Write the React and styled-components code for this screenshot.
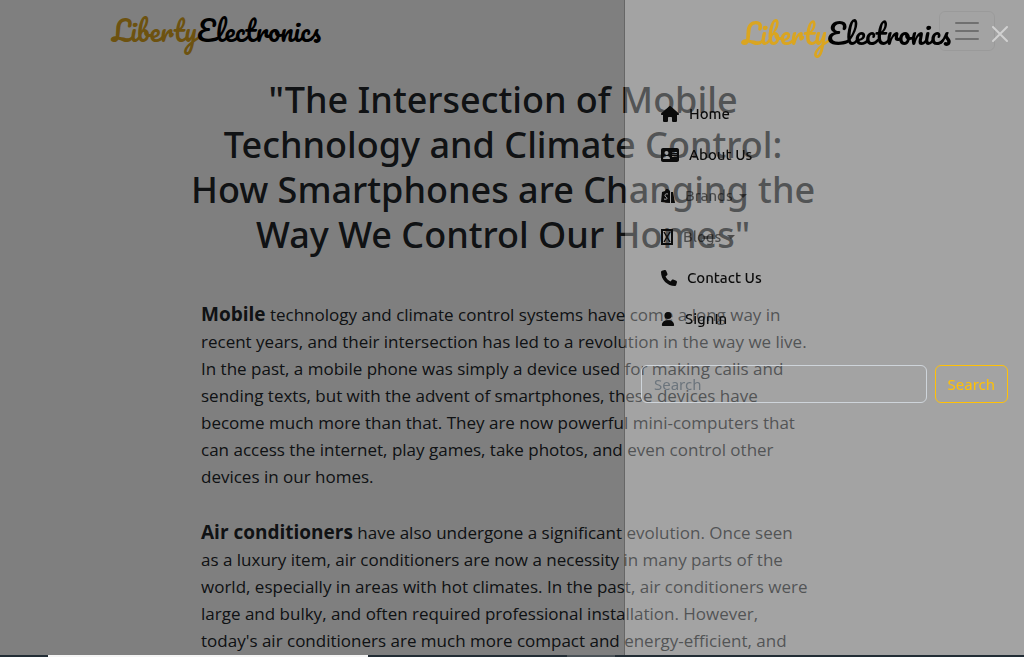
import React from "react";
import styled, { createGlobalStyle } from "styled-components";
import { FaHouse, FaAddressCard, FaPhone, FaUser } from "react-icons/fa6";

const GlobalStyle = createGlobalStyle`
  * { box-sizing: border-box; }
  html, body, #root { height: 100%; }
  body {
    margin: 0;
    overflow: hidden;
    background: #fff;
    color: #212529;
    font-family: "Segoe UI", "Noto Sans", "Open Sans", sans-serif;
    font-size: 16px;
  }
`;

const Page = styled.div`
  height: 100vh;
  overflow: hidden;
`;

const Navbar = styled.header`
  display: flex;
  align-items: center;
  justify-content: space-between;
  padding: 11px 29px 11px 112px;
`;

const Logo = styled.a`
  color: #000;
  font-family: Pacifico, cursive;
  font-size: 27px;
  font-weight: 400;
  line-height: 40px;
  text-decoration: none;
  white-space: nowrap;
`;

const LogoAccent = styled.span`
  color: #daa520;
`;

const Toggler = styled.button`
  display: flex;
  padding: 4px 12px;
  border: 1px solid rgba(0, 0, 0, 0.1);
  border-radius: 6px;
  background: none;
`;

const Article = styled.main`
  width: 59%;
  margin: 15px auto 0 201px;
`;

const Title = styled.h1`
  margin: 0 -16px 44px;
  font-size: 36px;
  font-weight: 500;
  line-height: 45px;
  text-align: center;
`;

const Paragraph = styled.p`
  margin: 0 0 29px;
  font-family: "Open Sans", sans-serif;
  font-size: 17px;
  font-weight: 400;
  line-height: 27px;
  white-space: nowrap;

  strong {
    font-size: 19px;
    font-weight: 700;
    line-height: 24px;
  }
`;

const Backdrop = styled.div`
  position: fixed;
  inset: 0;
  background: rgba(0, 0, 0, 0.5);
`;

const Drawer = styled.aside`
  position: fixed;
  top: 0;
  right: 0;
  bottom: 0;
  width: 400px;
  border-left: 1px solid rgba(0, 0, 0, 0.2);
  background: rgba(255, 255, 255, 0.28);
  background-clip: padding-box;
`;

const DrawerHeader = styled.div`
  display: flex;
  align-items: center;
  justify-content: flex-end;
  gap: 41px;
  padding: 14px 16px;
`;

const CloseButton = styled.button`
  display: flex;
  padding: 0;
  border: 0;
  background: none;
  color: #d1d1d1;
`;

const NavList = styled.ul`
  margin: 0;
  padding: 25px 36px 0;
  list-style: none;
`;

const NavLink = styled.a`
  display: flex;
  align-items: center;
  gap: 10px;
  height: 41px;
  color: #0b0b0b;
  font-family: Ubuntu, "Noto Sans", sans-serif;
  font-size: 15px;
  font-weight: 500;
  text-decoration: none;
`;

const NavLabel = styled.span`
  color: ${(p) => (p.$muted ? "rgba(0, 0, 0, 0.55)" : "inherit")};
`;

const Caret = styled.span`
  margin-left: -4px;
  border-top: 4px solid rgba(0, 0, 0, 0.55);
  border-right: 4px solid transparent;
  border-left: 4px solid transparent;
`;

const SearchForm = styled.form`
  display: flex;
  gap: 8px;
  padding: 26px 16px;
`;

const SearchInput = styled.input`
  flex: 1;
  min-width: 0;
  height: 38px;
  padding: 6px 12px;
  border: 1px solid #ced4da;
  border-radius: 6px;
  background: transparent;
  font-family: inherit;
  font-size: 15px;

  &::placeholder { color: #6c757d; }
`;

const SearchButton = styled.button`
  height: 38px;
  padding: 0 12px;
  border: 1px solid #ffc107;
  border-radius: 6px;
  background: none;
  color: #ffc107;
  font-family: inherit;
  font-size: 15px;
`;

const Taskbar = styled.div`
  position: fixed;
  right: 0;
  bottom: 0;
  left: 0;
  display: flex;
  height: 2px;
  padding-left: 48px;
  background: #222d35;
`;

const TaskbarItem = styled.div`
  width: ${(p) => p.$width}px;
  margin-right: 199px;
  background: ${(p) => p.$color};
`;

const BagIcon = () => (
  <svg width="14" height="14" viewBox="0 0 14 14" aria-hidden="true">
    <path d="M1 3 4 2 5 0h2l2 2v12L0 13z" fill="currentColor" />
    <path d="M10 3h2l2 11h-4z" fill="currentColor" />
    <path d="M7 5C4 4 3 7 5 8s1 3-2 2" fill="none" stroke="#a3a3a3" />
  </svg>
);

const MissingGlyphIcon = () => (
  <svg width="12" height="16" viewBox="0 0 12 16" fill="none" stroke="currentColor" aria-hidden="true">
    <path d="M1 1h10v14H1z" strokeWidth="2" />
    <path d="m3 3 6 10M9 3 3 13" strokeWidth="1.4" />
  </svg>
);

const links = [
  { label: "Home", icon: <FaHouse size={18} /> },
  { label: "About Us", icon: <FaAddressCard size={18} /> },
  { label: "Brands", icon: <BagIcon />, menu: true },
  { label: "Blogs", icon: <MissingGlyphIcon />, menu: true },
  { label: "Contact Us", icon: <FaPhone size={16} /> },
  { label: "SignIn", icon: <FaUser size={14} /> },
];

const Brand = () => (
  <Logo href="#"><LogoAccent>Liberty</LogoAccent>Electronics</Logo>
);

export default function App() {
  return (
    <Page>
      <GlobalStyle />
      <Navbar>
        <Brand />
        <Toggler type="button" aria-label="Toggle navigation">
          <svg width="30" height="30" viewBox="0 0 30 30" stroke="rgba(0,0,0,.55)" strokeWidth="2" strokeLinecap="round">
            <path d="M4 7h22M4 15h22M4 23h22" />
          </svg>
        </Toggler>
      </Navbar>
      <Article>
        <Title>
          "The Intersection of Mobile<br />
          Technology and Climate Control:<br />
          How Smartphones are Changing the<br />
          Way We Control Our Homes"
        </Title>
        <Paragraph>
          <strong>Mobile</strong> technology and climate control systems have come a long way in<br />
          recent years, and their intersection has led to a revolution in the way we live.<br />
          In the past, a mobile phone was simply a device used for making calls and<br />
          sending texts, but with the advent of smartphones, these devices have<br />
          become much more than that. They are now powerful mini-computers that<br />
          can access the internet, play games, take photos, and even control other<br />
          devices in our homes.
        </Paragraph>
        <Paragraph>
          <strong>Air conditioners</strong> have also undergone a significant evolution. Once seen<br />
          as a luxury item, air conditioners are now a necessity in many parts of the<br />
          world, especially in areas with hot climates. In the past, air conditioners were<br />
          large and bulky, and often required professional installation. However,<br />
          today's air conditioners are much more compact and energy-efficient, and
        </Paragraph>
      </Article>
      <Backdrop />
      <Drawer>
        <DrawerHeader>
          <Brand />
          <CloseButton type="button" aria-label="Close">
            <svg width="16" height="16" viewBox="0 0 16 16" stroke="currentColor" strokeWidth="2" strokeLinecap="round">
              <path d="m1 1 14 14M15 1 1 15" />
            </svg>
          </CloseButton>
        </DrawerHeader>
        <nav>
          <NavList>
            {links.map(({ label, icon, menu }) => (
              <li key={label}>
                <NavLink href="#">
                  {icon}
                  <NavLabel $muted={menu}>{label}</NavLabel>
                  {menu && <Caret />}
                </NavLink>
              </li>
            ))}
          </NavList>
        </nav>
        <SearchForm>
          <SearchInput type="search" placeholder="Search" aria-label="Search" />
          <SearchButton type="submit">Search</SearchButton>
        </SearchForm>
      </Drawer>
      <Taskbar>
        <TaskbarItem $width={320} $color="#f5f5f5" />
        <TaskbarItem $width={48} $color="#4b5358" />
      </Taskbar>
    </Page>
  );
}
